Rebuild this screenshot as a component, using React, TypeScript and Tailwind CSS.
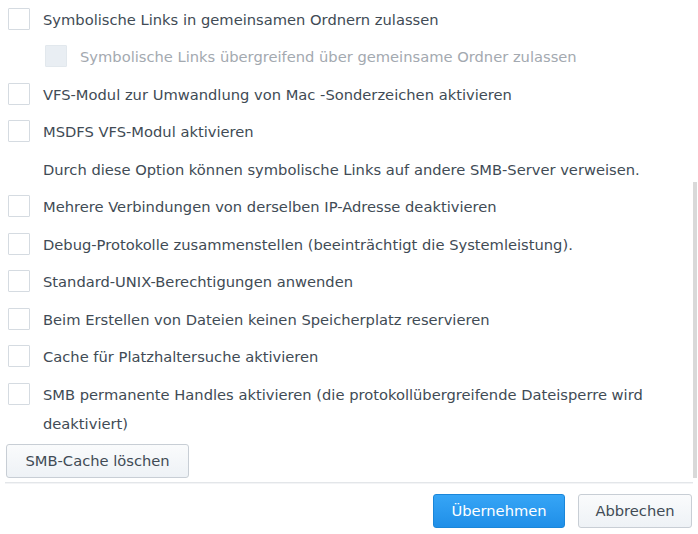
import React from "react";

type Row = { label: string; kind?: "check" | "disabled" | "text"; indent?: boolean };

const ROWS: Row[] = [
  { label: "Symbolische Links in gemeinsamen Ordnern zulassen" },
  { label: "Symbolische Links übergreifend über gemeinsame Ordner zulassen", kind: "disabled", indent: true },
  { label: "VFS-Modul zur Umwandlung von Mac -Sonderzeichen aktivieren" },
  { label: "MSDFS VFS-Modul aktivieren" },
  { label: "Durch diese Option können symbolische Links auf andere SMB-Server verweisen.", kind: "text" },
  { label: "Mehrere Verbindungen von derselben IP-Adresse deaktivieren" },
  { label: "Debug-Protokolle zusammenstellen (beeinträchtigt die Systemleistung)." },
  { label: "Standard-UNIX-Berechtigungen anwenden" },
  { label: "Beim Erstellen von Dateien keinen Speicherplatz reservieren" },
  { label: "Cache für Platzhaltersuche aktivieren" },
  { label: "SMB permanente Handles aktivieren (die protokollübergreifende Dateisperre wird deaktiviert)" },
];

function Box({ disabled }: { disabled?: boolean }) {
  return (
    <span
      className={`mt-[3px] h-[22px] w-[22px] flex-shrink-0 rounded-[1px] border ${
        disabled ? "border-[#e2e8ed] bg-[#e9eef3]" : "border-[#d5dbe1] bg-white"
      }`}
    />
  );
}

export default function App() {
  return (
    <div
      className="relative h-[534px] w-[698px] overflow-hidden bg-white text-[14.7px] text-[#414b55]"
      style={{ fontFamily: '"DejaVu Sans", Verdana, sans-serif' }}
    >
      <div className="pl-[8px] pr-[12px]">
        {ROWS.map((r, i) => (
          <div key={i} className={`flex min-h-[37.5px] items-start gap-[13px] pb-[3.5px] pt-[4.5px] leading-[29px] ${r.indent ? "pl-[37px]" : ""}`}>
            {r.kind === "text" ? (
              <span className="w-[22px] flex-shrink-0" />
            ) : (
              <Box disabled={r.kind === "disabled"} />
            )}
            <span className={r.kind === "disabled" ? "text-[#a3a9b0]" : ""}>{r.label}</span>
          </div>
        ))}
        <button className="-ml-[2px] mt-[3px] h-[34px] rounded-[3px] border border-[#c8ced5] bg-gradient-to-b from-[#fafbfc] to-[#eef2f6] px-[18.5px] text-[14.7px] text-[#414b55]">
          SMB-Cache löschen
        </button>
      </div>

      {/* scrollbar */}
      <div className="absolute right-[1px] top-[182px] h-[296px] w-[4px] bg-[#d9d9d9]" />

      {/* footer */}
      <div className="mx-[5px] mt-[4px] h-[2px] border-t border-[#e3e6e9] bg-[#f3f4f6]" />
      <div className="flex justify-end gap-[13px] pr-[6px] pt-[10px]">
        <button className="h-[34px] w-[132px] rounded-[3px] border border-[#1a86d9] bg-gradient-to-b from-[#36a5f6] to-[#1f8fe8] text-[14.7px] text-white">
          Übernehmen
        </button>
        <button className="h-[34px] w-[114px] rounded-[3px] border border-[#c8ced5] bg-gradient-to-b from-[#fafbfc] to-[#eef2f6] text-[14.7px] text-[#414b55]">
          Abbrechen
        </button>
      </div>
    </div>
  );
}
